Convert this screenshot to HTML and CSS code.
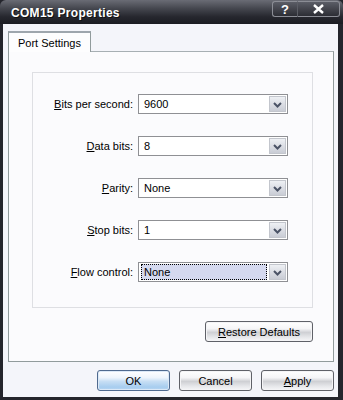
FILE: index.html
```html
<!DOCTYPE html>
<html lang="en">
<head>
  <meta charset="UTF-8" />
  <title>COM15 Properties</title>
  <link rel="stylesheet" href="styles.css">
</head>
<body>
  <div class="window">
    <div class="titlebar">
      <span class="title">COM15 Properties</span>
      <div class="caption-btns">
        <span class="cap-btn help">?</span>
        <span class="cap-btn close">
          <svg width="11" height="10" viewBox="0 0 11 10"><path d="M1 1 L10 9 M10 1 L1 9" stroke="#fff" stroke-width="2.4"/></svg>
        </span>
      </div>
    </div>

    <div class="client">
      <div class="tabs">
        <div class="tab">Port Settings</div>
      </div>

      <div class="panel">
        <div class="group">
          <label class="lbl"><u>B</u>its per second:</label>
          <div class="combo"><span class="val">9600</span><span class="drop"></span></div>

          <label class="lbl"><u>D</u>ata bits:</label>
          <div class="combo"><span class="val">8</span><span class="drop"></span></div>

          <label class="lbl"><u>P</u>arity:</label>
          <div class="combo"><span class="val">None</span><span class="drop"></span></div>

          <label class="lbl"><u>S</u>top bits:</label>
          <div class="combo"><span class="val">1</span><span class="drop"></span></div>

          <label class="lbl"><u>F</u>low control:</label>
          <div class="combo focused"><span class="val">None</span><span class="drop"></span></div>
        </div>

        <div class="panel-actions">
          <button class="btn restore"><u>R</u>estore Defaults</button>
        </div>
      </div>

      <div class="dialog-actions">
        <button class="btn default">OK</button>
        <button class="btn">Cancel</button>
        <button class="btn"><u>A</u>pply</button>
      </div>
    </div>
  </div>
</body>
</html>
```

FILE: styles.css
```css
* { box-sizing: border-box; margin: 0; padding: 0; }
body {
  font-family: 'Liberation Sans', Arial, sans-serif;
  font-size: 11px;
  color: #000;
  background: #f4f5fa;
}

.window {
  width: 343px;
  height: 400px;
  display: flex;
  flex-direction: column;
  background: #24252c;
}

/* title bar */
.titlebar {
  height: 24px;
  display: flex;
  align-items: flex-start;
  justify-content: space-between;
  padding: 0 3px 0 11px;
  background: linear-gradient(to bottom, #6a6c75 0%, #45474f 35%, #26272e 70%, #1b1c22 100%);
  border-radius: 6px 6px 0 0;
}
.title {
  color: #fff;
  font-weight: bold;
  font-size: 12px;
  letter-spacing: 0.3px;
  line-height: 26px;
  text-shadow: 1px 1px 0 #111;
}
.caption-btns {
  display: flex;
  margin-top: 1px;
}
.cap-btn {
  height: 16px;
  display: flex;
  align-items: center;
  justify-content: center;
  color: #fff;
  font-weight: bold;
  font-size: 13px;
  border: 1px solid #8b8d95;
  background: linear-gradient(to bottom, #5b5d66, #2c2d34);
}
.help {
  width: 26px;
  border-radius: 3px 0 0 3px;
  border-right-color: #5c5e66;
}
.close {
  width: 42px;
  border-radius: 0 3px 3px 0;
  border-left: none;
}

/* dialog client area */
.client {
  flex: 1;
  display: flex;
  flex-direction: column;
  margin: 0 5px 3px 3px;
  padding: 7px 0 0 5px;
  background: #f4f5fa;
}

.tabs {
  display: flex;
  height: 20px;
  position: relative;
  z-index: 1;
}
.tab {
  width: 83px;
  height: 21px;
  padding: 4px 0 0 9px;
  font-size: 11px;
  background: #fdfdfe;
  border: 1px solid #919b9c;
  border-bottom: none;
  border-top: 2px solid #9ea6ad;
}

.panel {
  width: 326px;
  height: 311px;
  background: #fbfbfd;
  border: 1px solid #919b9c;
  border-top-color: #a7afb3;
  padding: 20px 0 0 23px;
}

.group {
  width: 281px;
  height: 236px;
  border: 1px solid #dedfe3;
  display: grid;
  grid-template-columns: 100px 150px;
  grid-auto-rows: 20px;
  column-gap: 5px;
  row-gap: 22px;
  padding-top: 21px;
}
.lbl {
  text-align: right;
  align-self: center;
  font-size: 11px;
}
.combo {
  display: flex;
  align-items: center;
  border: 1px solid #8f9094;
  background: #fff;
  padding: 1px;
}
.val {
  flex: 1;
  height: 16px;
  padding: 2px 0 0 4px;
  font-size: 11px;
}
.focused .val {
  background: #d5d9ef;
  outline: 1px dotted #000;
  outline-offset: -1px;
  margin-left: 1px;
  margin-right: 2px;
  padding-left: 3px;
}
.drop {
  width: 17px;
  height: 16px;
  border: 1px solid #c3c6cd;
  background-image: url("data:image/svg+xml,%3Csvg xmlns='http://www.w3.org/2000/svg' width='9' height='6' viewBox='0 0 9 6'%3E%3Cpath d='M1 1 L4.5 4.5 L8 1' fill='none' stroke='%234b5366' stroke-width='2'/%3E%3C/svg%3E"), linear-gradient(to bottom, #eef0f4, #c9ccd5);
  background-repeat: no-repeat;
  background-position: center 5px, 0 0;
}

.panel-actions {
  display: flex;
  justify-content: flex-end;
  width: 281px;
  margin-top: 13px;
}

.dialog-actions {
  display: flex;
  justify-content: flex-end;
  gap: 9px;
  width: 326px;
  margin-top: 8px;
}

.btn {
  font-family: 'Liberation Sans', Arial, sans-serif;
  font-size: 11px;
  width: 73px;
  height: 21px;
  border: 1px solid #5f6168;
  border-radius: 3px;
  color: #000;
  background: linear-gradient(to bottom, #ffffff 0%, #f5f5f7 35%, #cfd0d4 55%, #e6e7ea 80%, #f6f6f8 100%);
  box-shadow: inset 0 0 0 1px #f4f4f6;
}
.btn.restore {
  width: 108px;
}
.btn.default {
  border-color: #4f6a8f;
  background: linear-gradient(to bottom, #ffffff 0%, #eef5fc 35%, #c6def4 55%, #a7cdef 85%, #b9d7f2 100%);
  box-shadow: inset 0 0 0 1px #dce9f7;
}
```
